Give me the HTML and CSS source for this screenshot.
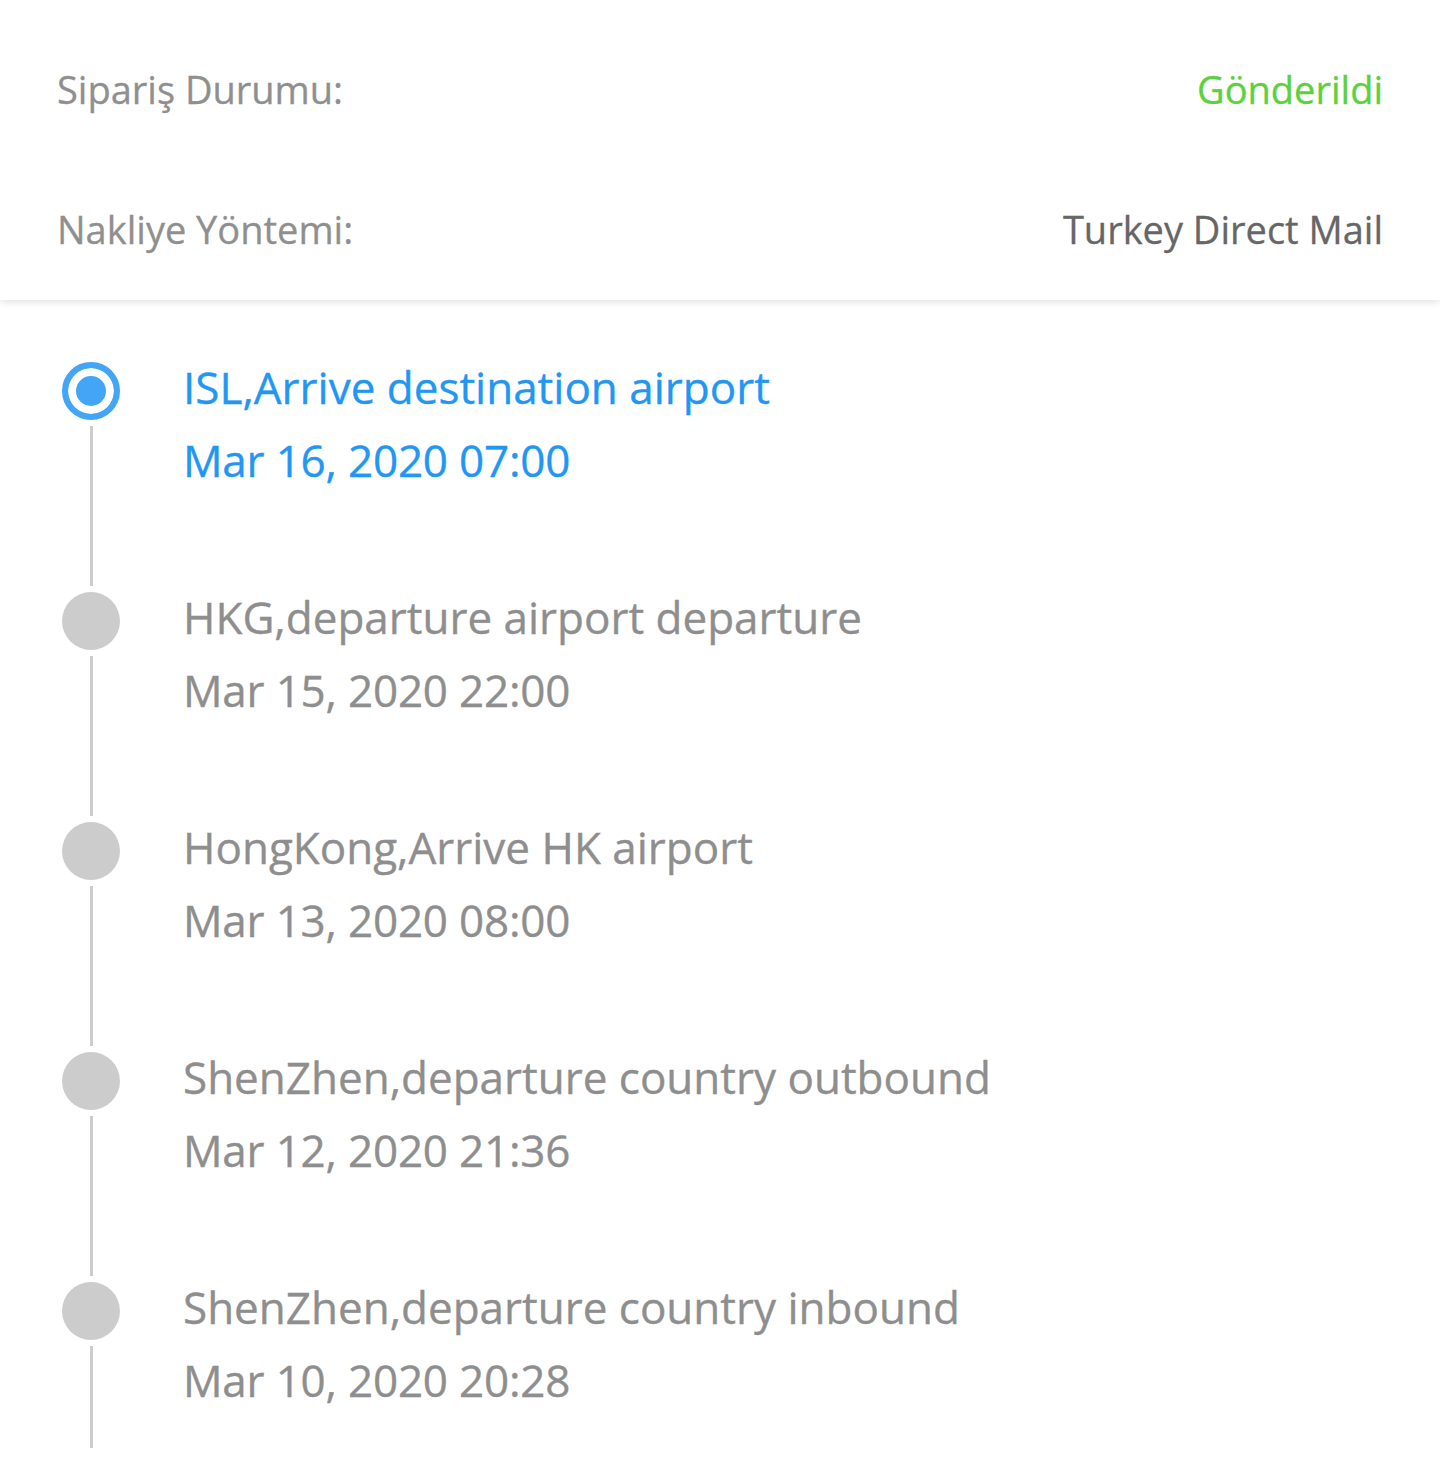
FILE: index.html
```html
<!DOCTYPE html>
<html lang="tr">
<head>
<meta charset="utf-8">
<title>Sipariş Takibi</title>
<link rel="stylesheet" href="styles.css">
</head>
<body>
<section class="info">
  <div class="row">
    <span class="label">Sipariş Durumu:</span>
    <span class="value status">Gönderildi</span>
  </div>
  <div class="row">
    <span class="label">Nakliye Yöntemi:</span>
    <span class="value">Turkey Direct Mail</span>
  </div>
</section>
<section class="timeline">
  <div class="item active">
    <div class="rail"><span class="dot"></span><span class="line"></span></div>
    <div class="text">
      <div class="title">ISL,Arrive destination airport</div>
      <div class="date">Mar 16, 2020 07:00</div>
    </div>
  </div>
  <div class="item">
    <div class="rail"><span class="dot"></span><span class="line"></span></div>
    <div class="text">
      <div class="title">HKG,departure airport departure</div>
      <div class="date">Mar 15, 2020 22:00</div>
    </div>
  </div>
  <div class="item">
    <div class="rail"><span class="dot"></span><span class="line"></span></div>
    <div class="text">
      <div class="title">HongKong,Arrive HK airport</div>
      <div class="date">Mar 13, 2020 08:00</div>
    </div>
  </div>
  <div class="item">
    <div class="rail"><span class="dot"></span><span class="line"></span></div>
    <div class="text">
      <div class="title">ShenZhen,departure country outbound</div>
      <div class="date">Mar 12, 2020 21:36</div>
    </div>
  </div>
  <div class="item last">
    <div class="rail"><span class="dot"></span><span class="line"></span></div>
    <div class="text">
      <div class="title">ShenZhen,departure country inbound</div>
      <div class="date">Mar 10, 2020 20:28</div>
    </div>
  </div>
</section>
</body>
</html>
```
FILE: styles.css
```css
html, body {
  margin: 0;
  padding: 0;
  background: #ffffff;
  font-family: "Open Sans", "Noto Sans", sans-serif;
}
.info {
  background: #ffffff;
  padding: 19px 57px 0 57px;
  box-shadow: 0 2px 8px rgba(0, 0, 0, 0.12);
  position: relative;
  z-index: 1;
  box-sizing: border-box;
  height: 300px;
}
.row {
  display: flex;
  justify-content: space-between;
  align-items: center;
  height: 140px;
}
.label {
  font-size: 38px;
  color: #8f8f8f;
  -webkit-text-stroke: 0.3px #8f8f8f;
}
.value {
  font-size: 38px;
  color: #666666;
  -webkit-text-stroke: 0.3px #666666;
}
.status {
  color: #5cd13e;
  -webkit-text-stroke: 0.3px #5cd13e;
}
.timeline {
  padding: 62px 0 0 62px;
}
.item {
  display: flex;
  height: 230px;
}
.item.last {
  height: 166px;
}
.rail {
  width: 58px;
  display: flex;
  flex-direction: column;
  align-items: center;
}
.dot {
  width: 58px;
  height: 58px;
  border-radius: 50%;
  background: #cccccc;
  box-sizing: border-box;
  flex: none;
}
.line {
  width: 3px;
  flex: 1;
  background: #cccccc;
  margin: 6px 0 6px;
}
.last .line {
  margin-bottom: 0;
}
.active .dot {
  background: #42a5f5;
  border: 6px solid #42a5f5;
  box-shadow: inset 0 0 0 8px #ffffff;
}
.text {
  margin-left: 63px;
  margin-top: -11px;
}
.title, .date {
  font-size: 44px;
  line-height: 73px;
  color: #8e8e8e;
  -webkit-text-stroke: 0.35px #8e8e8e;
  white-space: nowrap;
}
.date {
  letter-spacing: -0.2px;
}
.active .title, .active .date {
  color: #2196f3;
  -webkit-text-stroke: 0.35px #2196f3;
}
```
